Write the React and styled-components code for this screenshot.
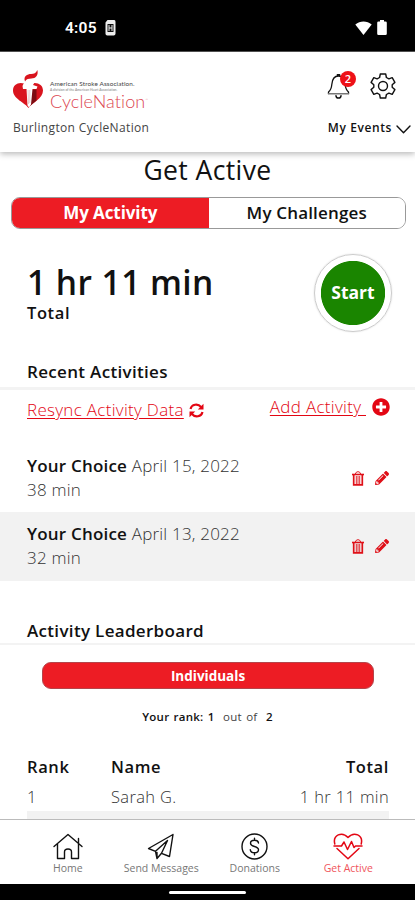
import React from 'react'
import styled, { createGlobalStyle } from 'styled-components'
import { FaPencilAlt, FaPlusCircle } from 'react-icons/fa'

const GlobalStyle = createGlobalStyle`
* { box-sizing: border-box; }
body {
  margin: 0;
  background: #fff;
  font-family: "Open Sans", "Noto Sans", sans-serif;
  color: #111;
}
p, h1, h2 { margin: 0; white-space: nowrap; }
svg { display: block; flex: none; }
button { font: inherit; border: 0; padding: 0; background: none; color: inherit; white-space: nowrap; }
`

const Screen = styled.div`
display:flex;
flex-direction:column;
width:415px;
height:900px;
overflow:hidden;
background:#fff;
`

const StatusBar = styled.div`
display:flex;
justify-content:space-between;
align-items:center;
flex:none;
height:52px;
padding:4px 28px 0 65px;
background:#000;
color:#fff;
border-bottom:1px solid #555;
`
const StatusGroup = styled.div`
display:flex;
align-items:center;
gap:${(p) => p.$gap}px;
`
const Clock = styled.span`
font-family: Roboto, sans-serif;
font-weight:600;
font-size:15.5px;
letter-spacing:0.25px;
`

const Header = styled.header`
display:flex;
justify-content:space-between;
flex:none;
height:100px;
padding:17px 4px 0 13px;
background:#fff;
box-shadow:0 2px 6px rgba(0,0,0,.28);
z-index:1;
`
const Brand = styled.div`
display:flex;
flex-direction:column;
`
const Logo = styled.div`
display:flex;
height:45px;
gap:7px;
svg { margin-top:1px; }
`
const LogoText = styled.div`
display:flex;
flex-direction:column;
padding-top:11px;
white-space:nowrap;
`
const Association = styled.span`
font-family: Lato, sans-serif;
font-size:6.4px;
line-height:8px;
letter-spacing:0.12px;
color:#444;
`
const Division = styled.span`
font-family: Lato, sans-serif;
font-size:3.3px;
line-height:4px;
letter-spacing:0.05px;
color:#777;
`
const BrandName = styled.span`
font-family: Lato, sans-serif;
font-weight:300;
font-size:18px;
line-height:18px;
letter-spacing:0.1px;
color:#dc4650;
sup { font-size:3.5px; vertical-align:7px; line-height:0; letter-spacing:0; }
`
const EventName = styled.p`
margin-top:5px;
font-size:12px;
line-height:18px;
letter-spacing:0.35px;
color:#444;
`
const HeaderSide = styled.div`
display:flex;
flex-direction:column;
align-items:flex-end;
`
const HeaderIcons = styled.div`
display:flex;
gap:16px;
padding:4px 15px 0 0;
height:45px;
`
const BellWrap = styled.div`
position:relative;
width:27px;
`
const Badge = styled.span`
position:absolute;
left:13px;
top:-2px;
width:16px;
height:16px;
border-radius:50%;
background:#ee1118;
color:#fff;
font-size:11px;
font-weight:600;
line-height:16px;
text-align:center;
`
const EventsMenu = styled.button`
display:flex;
align-items:center;
gap:4px;
margin-top:5px;
font-size:12px;
font-weight:600;
line-height:18px;
letter-spacing:0.6px;
svg { margin-top:3px; }
`

const Main = styled.main`
display:flex;
flex-direction:column;
flex:1;
min-height:0;
overflow:hidden;
`
const PageTitle = styled.h1`
font-size:26.5px;
font-weight:500;
line-height:36px;
letter-spacing:0.4px;
text-align:center;
`
const Tabs = styled.div`
display:flex;
flex:none;
height:32px;
margin:9px 9px 0 11px;
border:1px solid #999;
border-radius:9px;
overflow:hidden;
`
const Tab = styled.button`
flex:1;
font-size:17px;
font-weight:${(p) => (p.$active ? 700 : 600)};
line-height:30px;
letter-spacing:${(p) => (p.$active ? -0.1 : 0.17)}px;
color:${(p) => (p.$active ? '#fff' : '#111')};
background:${(p) => (p.$active ? '#ed1c24' : '#fff')};
`
const Summary = styled.section`
display:flex;
justify-content:space-between;
flex:none;
height:126px;
padding:25px 23px 0 27px;
`
const Duration = styled.p`
margin-top:6px;
font-size:33.5px;
font-weight:600;
line-height:44px;
letter-spacing:0.45px;
`
const DurationLabel = styled.p`
font-size:16.5px;
font-weight:600;
line-height:18px;
letter-spacing:0.6px;
`
const StartButton = styled.button`
width:78px;
height:78px;
padding-bottom:2px;
border:1px solid #ccc;
border-radius:50%;
background:radial-gradient(circle, #1a8500 31.7px, #fff 32.5px);
box-shadow:0 0 2px rgba(0,0,0,.15);
color:#fff;
font-size:17.5px;
font-weight:700;
`
const SectionTitle = styled.h2`
flex:none;
height:${(p) => p.$height}px;
padding:${(p) => p.$top}px 0 0 27px;
border-bottom:${(p) => p.$line}px solid #f3f3f3;
font-size:17px;
font-weight:600;
line-height:22px;
letter-spacing:0.32px;
`
const ActionBar = styled.div`
display:flex;
justify-content:space-between;
align-items:flex-start;
flex:none;
height:54px;
padding:5px 25px 0 27px;
`
const Action = styled.div`
display:flex;
align-items:center;
gap:${(p) => p.$gap}px;
padding-top:${(p) => p.$drop || 0}px;
color:#e30613;
`
const ActionLink = styled.a`
font-size:17px;
font-weight:300;
line-height:24px;
letter-spacing:0.3px;
text-decoration:underline;
text-underline-offset:2px;
white-space:pre;
`
const Activity = styled.div`
display:flex;
justify-content:space-between;
align-items:center;
flex:none;
height:${(p) => (p.$shaded ? 69 : 68)}px;
padding:0 26px ${(p) => (p.$shaded ? 1 : 0)}px 27px;
background:${(p) => (p.$shaded ? '#f2f2f2' : '#fff')};
`
const ActivityText = styled.p`
font-size:17px;
font-weight:300;
line-height:24px;
letter-spacing:0.2px;
color:#333;
b { font-weight:600; color:#111; }
`
const ActivityTools = styled.div`
display:flex;
align-items:center;
gap:11px;
color:#df1018;
`
const GroupTab = styled.button`
flex:none;
height:27px;
margin:17px 41px 0 42px;
padding-top:1px;
border:1px solid #b5444a;
border-radius:9px;
background:#ed1c24;
color:#fff;
font-size:13.5px;
font-weight:700;
line-height:24px;
`
const RankLine = styled.p`
margin-top:19px;
font-size:11.5px;
font-weight:400;
line-height:18px;
letter-spacing:0.25px;
word-spacing:1px;
text-align:center;
color:#444;
b { font-weight:600; color:#111; }
`
const Leaderboard = styled.div`
display:flex;
flex-direction:column;
margin:29px 26px 0 27px;
`
const LeaderRow = styled.div`
display:grid;
grid-template-columns:84px 1fr auto;
flex:none;
height:${(p) => (p.$head ? 30 : 26)}px;
align-items:flex-start;
background:${(p) => (p.$shaded ? '#f2f2f2' : 'transparent')};
font-size:16.5px;
font-weight:${(p) => (p.$head ? 600 : 300)};
line-height:24px;
letter-spacing:${(p) => (p.$head ? 0.6 : 0.35)}px;
color:${(p) => (p.$head ? '#111' : '#333')};
`

const BottomNav = styled.nav`
display:flex;
flex:none;
height:65px;
padding:0 20px 0 21px;
border-top:1px solid #bbb;
background:#fff;
`
const NavItem = styled.button`
display:flex;
flex-direction:column;
align-items:center;
flex:1;
padding-top:13px;
font-size:10.5px;
line-height:15px;
color:${(p) => (p.$active ? '#f0555c' : '#777')};
svg { margin-bottom:1px; color:${(p) => (p.$active ? '#e30613' : '#111')}; }
`
const GestureBar = styled.div`
display:flex;
justify-content:center;
flex:none;
height:16px;
padding-top:7px;
background:#000;
`
const GestureHandle = styled.div`
width:77px;
height:3px;
border-radius:2px;
background:#fff;
`

const outline = { fill: 'none', stroke: 'currentColor', strokeLinejoin: 'round', strokeLinecap: 'round' }

const SimIcon = () => (
  <svg width="11" height="16" viewBox="0 0 11 16">
    <path d="M2.5 0h6A1.8 1.8 0 0 1 10.5 1.8v12A1.8 1.8 0 0 1 8.7 15.5H2.3A1.8 1.8 0 0 1 .5 13.7V2.5z" fill="#eee" />
    <path d="M2.5 4h6v8h-6z" fill="#111" />
    <path d="M4 5v6M7 5v6M4 8h3" stroke="#eee" strokeWidth="1" />
  </svg>
)

const WifiIcon = () => (
  <svg width="17" height="14" viewBox="0 0 17 14">
    <path d="M8.5 14L.3 3.5C5 -.6 12 -.6 16.7 3.5z" fill="#fff" />
  </svg>
)

const BatteryIcon = () => (
  <svg width="10" height="15" viewBox="0 0 10 15">
    <path d="M3 0h4v1.5h1.5A1.3 1.3 0 0 1 9.8 2.8v10.9A1.3 1.3 0 0 1 8.5 15h-7A1.3 1.3 0 0 1 .2 13.7V2.8A1.3 1.3 0 0 1 1.5 1.5H3z" fill="#fff" />
  </svg>
)

// heart with the torch cut out of it
const HeartTorch = () => (
  <svg width="30" height="38" viewBox="0 0 30 38">
    <path d="M15.500 38C12 32.500 0 29 0 20.500c0-7 8-10 14.500-5C21 10.500 30 13 30 20.500c0 8-10 11.500-14.500 17.500z" fill="#d9141e" />
    <path d="M19 19.500h4.500v11L17 36z" fill="#7d0c12" />
    <path d="M9.500 16c1-3.500 3.500-5 7-5.500 3-.5 5 0 5 2l-1.500 2.500 4.500 1.500-1 2.500h-4L18 34.500l-2 3-1.500-2L13.500 19H10z" fill="#fff" />
    <path d="M12 11.500C10 6 14.500 4 18 4c3 0 5-1 6.300-4 1.500 5-1.800 8.500-5.800 8.500-2.500 0-5.500 .6-6.500 3z" fill="#d9141e" />
    <path d="M15 20l.5 14M16.800 20v13" stroke="#c99" strokeWidth=".5" />
  </svg>
)

const BellIcon = () => (
  <svg width="24" height="26" viewBox="0 0 24 26" {...outline} strokeWidth="1.3">
    <path d="M10.3 3V1.7h2.4V3M1.5 20.5v-1.5c1.8-1.4 2.9-3 3.3-7.5C5.2 6.2 7.3 3 11.5 3s6.3 3.2 6.7 8.5c.4 4.5 1.5 6.1 3.3 7.5v1.5" />
    <path d="M1.5 20.8h20" strokeWidth="1.6" stroke="#777" />
    <path d="M9 22.8c.4 3 4.6 3 5 0" strokeWidth="1.5" />
  </svg>
)

const GearIcon = () => (
  <svg width="26" height="26" viewBox="0 0 26 26" {...outline} strokeWidth="1.4">
    <path d="M10.3 1h5.4l.7 3.5 2.5 1.4 3.3-1.2 2.7 4.7-2.7 2.3v2.6l2.7 2.3-2.7 4.7-3.3-1.2-2.5 1.4-.7 3.5h-5.4l-.7-3.5-2.5-1.4-3.3 1.2-2.7-4.7 2.7-2.3v-2.6L1.1 9.4l2.7-4.7 3.3 1.2 2.5-1.4z" />
    <circle cx="13" cy="13" r="4.5" />
  </svg>
)

const ChevronIcon = () => (
  <svg width="15" height="9" viewBox="0 0 15 9" {...outline} strokeWidth="1.4">
    <path d="M1 1l6.5 6.8L14 1" />
  </svg>
)

const SyncIcon = () => (
  <svg width="15" height="15" viewBox="0 0 15 15">
    <path d="M1.5 6C2.5 1.2 9 .2 12 4M13.5 9c-1 4.8-7.5 5.8-10.5 2" fill="none" stroke="currentColor" strokeWidth="2.1" />
    <path d="M14.5 .8v5.7H8.800zM.5 14.2V8.500h5.700z" fill="currentColor" />
  </svg>
)

const TrashIcon = () => (
  <svg width="12" height="15" viewBox="0 0 12 15" fill="none" stroke="currentColor">
    <path d="M3.5 3c0-3 5-3 5 0" />
    <path d="M0 3.5h12" strokeWidth="1.6" />
    <path d="M1.7 4v9.8h8.6V4" strokeWidth="1.7" />
    <path d="M4.3 5v8M6 5v8M7.7 5v8" strokeWidth=".9" />
  </svg>
)

const HomeIcon = () => (
  <svg width="30" height="27" viewBox="0 0 30 27" {...outline} strokeWidth="1.4">
    <path d="M1 13.5L15 1.5l14 12M4.5 11v14.5h7V19c0-4 7-4 7 0v6.5h7V11M25.5 10V5.5" />
  </svg>
)

const SendIcon = () => (
  <svg width="28" height="27" viewBox="0 0 28 27" {...outline} strokeWidth="1.4">
    <path d="M26 1.5L1.5 15.5l7 2.8L20.5 7.500l-6 12.800 8 3.200L26 1.500M8.500 18.300l1.500 7.200 4.500-5.200M10 25.500v-6" />
  </svg>
)

const DollarIcon = () => (
  <svg width="27" height="27" viewBox="0 0 27 27" {...outline} strokeWidth="1.4">
    <circle cx="13.5" cy="13.5" r="12.5" />
    <path d="M17.5 10c-.3-1.8-1.8-2.7-4-2.7s-4 1-4 3c0 4.2 8 2.2 8 6.5 0 2-1.8 3-4 3s-3.9-1-4.200-3M13.500 5.300v2M13.500 19.800v2" />
  </svg>
)

const HeartbeatIcon = () => (
  <svg width="30" height="27" viewBox="0 0 30 27" {...outline} strokeWidth="1.5">
    <path d="M1.8 11C-.5 2 9-2 15 4.5 21-2 30.5 2 28.2 11M4 15.5l11 10.3 11-10.3" />
    <path d="M1 13h7.5l2.500-4 3.500 7.500 4-8 2.500 6 1.500-1.500H29" />
  </svg>
)

const activities = [
  { name: 'Your Choice', date: 'April 15, 2022', time: '38 min' },
  { name: 'Your Choice', date: 'April 13, 2022', time: '32 min' },
]

const navItems = [
  { label: 'Home', Icon: HomeIcon },
  { label: 'Send Messages', Icon: SendIcon },
  { label: 'Donations', Icon: DollarIcon },
  { label: 'Get Active', Icon: HeartbeatIcon },
]

function App() {
  return (
    <Screen>
      <GlobalStyle />
      <StatusBar>
        <StatusGroup $gap={8}>
          <Clock>4:05</Clock>
          <SimIcon />
        </StatusGroup>
        <StatusGroup $gap={5}>
          <WifiIcon />
          <BatteryIcon />
        </StatusGroup>
      </StatusBar>

      <Header>
        <Brand>
          <Logo>
            <HeartTorch />
            <LogoText>
              <Association>American Stroke Association.</Association>
              <Division>A division of the American Heart Association.</Division>
              <BrandName>CycleNation<sup>™</sup></BrandName>
            </LogoText>
          </Logo>
          <EventName>Burlington CycleNation</EventName>
        </Brand>
        <HeaderSide>
          <HeaderIcons>
            <BellWrap>
              <BellIcon />
              <Badge>2</Badge>
            </BellWrap>
            <GearIcon />
          </HeaderIcons>
          <EventsMenu>My Events <ChevronIcon /></EventsMenu>
        </HeaderSide>
      </Header>

      <Main>
        <PageTitle>Get Active</PageTitle>
        <Tabs>
          <Tab $active>My Activity</Tab>
          <Tab>My Challenges</Tab>
        </Tabs>

        <Summary>
          <div>
            <Duration>1 hr 11 min</Duration>
            <DurationLabel>Total</DurationLabel>
          </div>
          <StartButton>Start</StartButton>
        </Summary>

        <SectionTitle $height={35} $top={6} $line={3}>Recent Activities</SectionTitle>
        <ActionBar>
          <Action $drop={3} $gap={5}>
            <ActionLink>Resync Activity Data</ActionLink>
            <SyncIcon />
          </Action>
          <Action $gap={6}>
            <ActionLink>{'Add Activity '}</ActionLink>
            <FaPlusCircle size={18} />
          </Action>
        </ActionBar>

        {activities.map((a, index) => (
          <Activity key={index} $shaded={index % 2 === 1}>
            <ActivityText>
              <b>{a.name}</b> {a.date}
              <br />
              {a.time}
            </ActivityText>
            <ActivityTools>
              <TrashIcon />
              <FaPencilAlt size={14} />
            </ActivityTools>
          </Activity>
        ))}

        <SectionTitle $height={64} $top={39} $line={2}>Activity Leaderboard</SectionTitle>
        <GroupTab>Individuals</GroupTab>
        <RankLine><b>Your rank: 1</b>&nbsp; out of &nbsp;<b>2</b></RankLine>

        <Leaderboard>
          <LeaderRow $head>
            <span>Rank</span>
            <span>Name</span>
            <span>Total</span>
          </LeaderRow>
          <LeaderRow>
            <span>1</span>
            <span>Sarah G.</span>
            <span>1 hr 11 min</span>
          </LeaderRow>
          <LeaderRow $shaded />
        </Leaderboard>
      </Main>

      <BottomNav>
        {navItems.map(({ label, Icon }) => (
          <NavItem key={label} $active={label === 'Get Active'}>
            <Icon />
            {label}
          </NavItem>
        ))}
      </BottomNav>
      <GestureBar>
        <GestureHandle />
      </GestureBar>
    </Screen>
  )
}

export default App
